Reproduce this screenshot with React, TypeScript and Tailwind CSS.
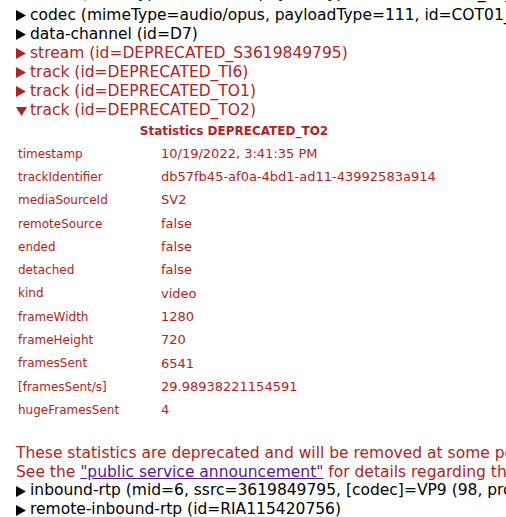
import React from "react";

const Tri = ({ open = false }: { open?: boolean }) =>
  open ? (
    <svg width="11" height="10" viewBox="0 0 11 10" className="inline-block shrink-0 mr-[3px]">
      <polygon points="0,1 11,1 5.5,10" fill="currentColor" />
    </svg>
  ) : (
    <svg width="10" height="11" viewBox="0 0 10 11" className="inline-block shrink-0 mr-[4px]">
      <polygon points="0,0 10,5.5 0,11" fill="currentColor" />
    </svg>
  );

const Summary = ({ text, red = false, open = false }: { text: string; red?: boolean; open?: boolean }) => (
  <div className={`flex items-center whitespace-nowrap h-[19px] ${red ? "text-[#b22222]" : "text-black"}`}>
    <Tri open={open} />
    <span>{text}</span>
  </div>
);

const rows: [string, string][] = [
  ["timestamp", "10/19/2022, 3:41:35 PM"],
  ["trackIdentifier", "db57fb45-af0a-4bd1-ad11-43992583a914"],
  ["mediaSourceId", "SV2"],
  ["remoteSource", "false"],
  ["ended", "false"],
  ["detached", "false"],
  ["kind", "video"],
  ["frameWidth", "1280"],
  ["frameHeight", "720"],
  ["framesSent", "6541"],
  ["[framesSent/s]", "29.98938221154591"],
  ["hugeFramesSent", "4"],
];

export default function App() {
  return (
    <div className="w-[506px] h-[517px] overflow-hidden bg-white font-['DejaVu_Sans',sans-serif] text-[15.5px]">
      <div className="pl-4">
        <div className="h-[6px] overflow-hidden">
          <div className="-mt-[16px]">
            <Summary text="codec (mimeType=video/rtx, payloadType=97, id=COT01_97_apt=96)" />
          </div>
        </div>
        <Summary text="codec (mimeType=audio/opus, payloadType=111, id=COT01_111_minptime=10;useinbandfec=1)" />
        <Summary text="data-channel (id=D7)" />
        <Summary red text="stream (id=DEPRECATED_S3619849795)" />
        <Summary red text="track (id=DEPRECATED_TI6)" />
        <Summary red text="track (id=DEPRECATED_TO1)" />
        <Summary red open text="track (id=DEPRECATED_TO2)" />
        <div className="w-[436px] text-[#b22222] text-[12px]">
          <div className="h-[22px] flex items-center justify-center font-bold">Statistics DEPRECATED_TO2</div>
          {rows.map(([k, v]) => (
            <div key={k} className="flex h-[23.3px] items-center">
              <div className="w-[145px] pl-[2px]">{k}</div>
              <div className="text-[13px]">{v}</div>
            </div>
          ))}
        </div>
        <div className="mt-[22px] text-[#b22222] whitespace-nowrap leading-[19px]">
          <div>These statistics are deprecated and will be removed at some point in the future.</div>
          <div>
            See the <span className="text-[#551a8b] underline">"public service announcement"</span> for details regarding the deprecation.
          </div>
        </div>
        <Summary text="inbound-rtp (mid=6, ssrc=3619849795, [codec]=VP9 (98, profile-id=0))" />
        <Summary text="remote-inbound-rtp (id=RIA115420756)" />
      </div>
    </div>
  );
}
